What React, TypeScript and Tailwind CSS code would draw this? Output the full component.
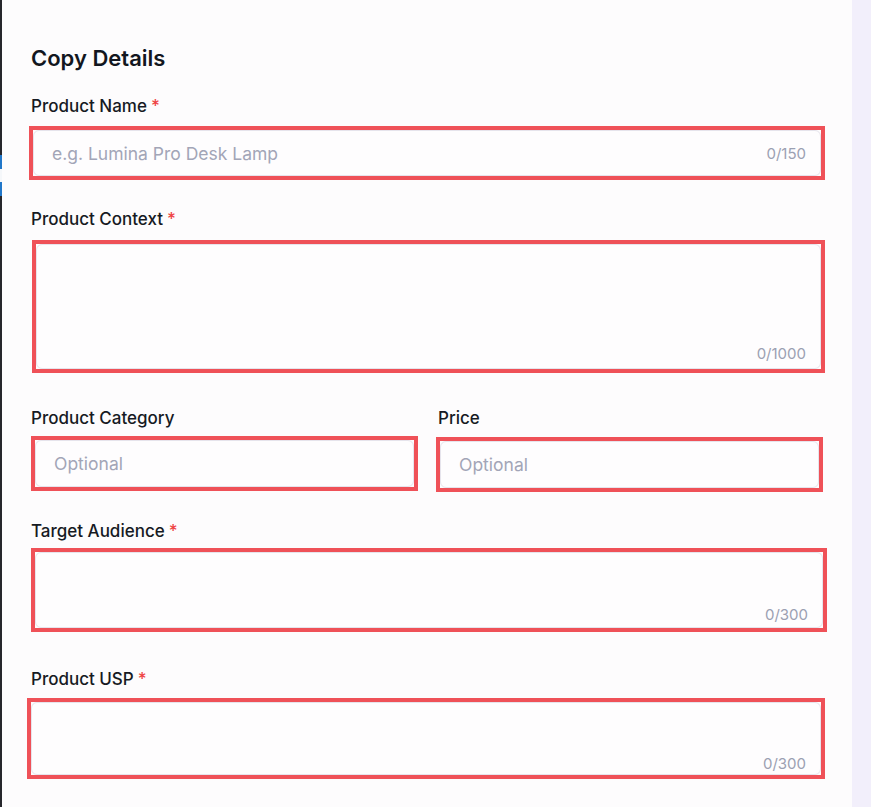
import React from "react";

type FieldProps = {
  label: string;
  required?: boolean;
  placeholder?: string;
  max?: number;
  height: string;
  counterClass?: string;
  className?: string;
};

function Field({ label, required, placeholder, max, height, counterClass, className }: FieldProps) {
  return (
    <div className={className}>
      <label className="block text-[17px] leading-6 font-medium text-[#161a23]">
        {label}
        {required && <span className="ml-1 text-[#ef4444]">*</span>}
      </label>
      <div className={`border-4 border-[#ef5158] ${height}`}>
        <div className="relative h-full rounded-md border border-[#e6e4ec] bg-[#fefdfe]">
          {placeholder && (
            <span className="absolute left-[18px] top-[11px] text-[17.5px] leading-6 text-[#a2a5b7]">
              {placeholder}
            </span>
          )}
          {max !== undefined && (
            <span className={`absolute right-[14px] text-[15px] leading-5 text-[#9ba0b2] ${counterClass ?? "bottom-[3px]"}`}>
              0/{max}
            </span>
          )}
        </div>
      </div>
    </div>
  );
}

export default function App() {
  return (
    <div className="flex h-[807px] w-full overflow-hidden font-['Inter',sans-serif]">
      {/* edge of the window behind */}
      <div className="flex w-[2px] flex-col">
        <div className="h-[155px] bg-[#26272c]" />
        <div className="h-[14px] bg-[#2177c9]" />
        <div className="h-[13px] bg-[#f5f7fa]" />
        <div className="h-[14px] bg-[#2177c9]" />
        <div className="flex-1 bg-[#26272c]" />
      </div>

      <main className="flex-1 bg-[#fdfcfd] pl-[29px] pr-[27px] pt-[44px]">
        <h2 className="text-[22px] leading-7 font-semibold text-[#121620]">Copy Details</h2>

        <Field
          className="mt-[22px] -ml-[2px] [&>label]:ml-[2px] [&>label]:mb-[8px]"
          label="Product Name"
          required
          placeholder="e.g. Lumina Pro Desk Lamp"
          max={150}
          height="h-[54px]"
          counterClass="top-[13px]"
        />

        <Field
          className="mt-[27px] ml-px [&>label]:-ml-px [&>label]:mb-[9px]"
          label="Product Context"
          required
          max={1000}
          height="h-[133px]"
          counterClass="bottom-[4px]"
        />

        <div className="mt-[33px] grid grid-cols-2 gap-5">
          <Field
            className="[&>label]:mb-[6px]"
            label="Product Category"
            placeholder="Optional"
            height="h-[55px]"
          />
          <Field
            className="-ml-[2px] mr-[2px] [&>label]:ml-[2px] [&>label]:mb-[7px]"
            label="Price"
            placeholder="Optional"
            height="h-[55px]"
          />
        </div>

        <Field
          className="mt-[27px] -mr-[2px] [&>label]:mb-[5px]"
          label="Target Audience"
          required
          max={300}
          height="h-[84px]"
          counterClass="bottom-[2px]"
        />

        <Field
          className="mt-[35px] -ml-[4px] [&>label]:ml-[4px] [&>label]:mb-[7px]"
          label="Product USP"
          required
          max={300}
          height="h-[81px]"
          counterClass="bottom-0"
        />
      </main>

      <aside className="w-[19px] bg-[#f2effb]" />
    </div>
  );
}
